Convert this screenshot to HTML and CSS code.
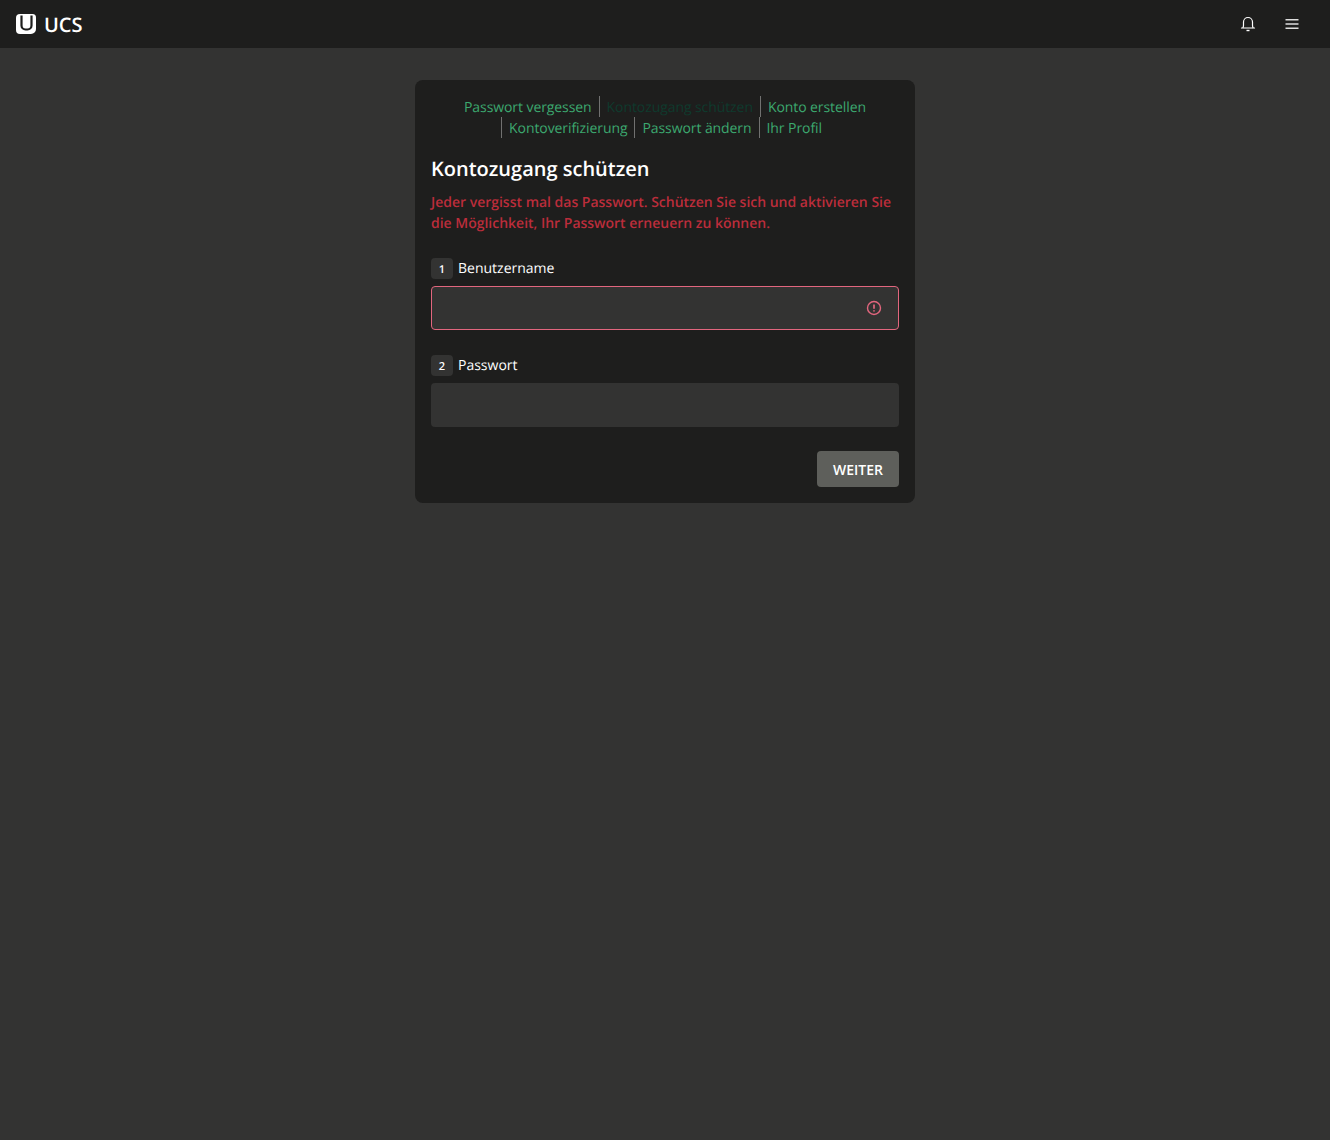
FILE: index.html
```html
<!DOCTYPE html>
<html lang="de">
<head>
<meta charset="utf-8">
<title>UCS</title>
<link rel="stylesheet" href="styles.css">
</head>
<body>
<header class="topbar">
  <a class="brand" href="#">
    <svg class="logo" width="20" height="20" viewBox="0 0 20 20"><path fill="#fff" d="M4 0h12.500a3.500 3.500 0 0 1 3.500 3.500V15a5 5 0 0 1-5 5H4a4 4 0 0 1-4-4V4a4 4 0 0 1 4-4z"/><path fill="none" stroke="#1e1e1d" stroke-width="2.200" d="M5.500 1.500V11.500a4 4 0 0 0 4 4h2a4 4 0 0 0 4-4V1.500"/></svg>
    <span class="brand-name">UCS</span>
  </a>
  <div class="actions">
    <button class="icon-btn" aria-label="Benachrichtigungen">
      <svg width="20" height="20" viewBox="0 0 20 20" fill="none" stroke="#fff" stroke-width="1.200"><path d="M4.800 14c.5-.8.700-1.700.700-2.800V8a4.500 4.500 0 0 1 9 0v3.200c0 1.100.2 2 .7 2.800"/><path d="M3.500 14h13" stroke-linecap="round"/><path d="M8.500 16.500h3" stroke-width="1.400"/></svg>
    </button>
    <button class="icon-btn" aria-label="Menü">
      <svg width="20" height="20" viewBox="0 0 20 20" fill="#ddd"><rect x="3.500" y="5" width="13" height="1.500"/><rect x="3.500" y="9.250" width="13" height="1.500"/><rect x="3.500" y="13.500" width="13" height="1.500"/></svg>
    </button>
  </div>
</header>
<main class="page">
  <section class="card">
    <nav class="links">
      <a class="link" href="#">Passwort vergessen</a>
      <a class="link divided current" href="#">Kontozugang schützen</a>
      <a class="link divided" href="#">Konto erstellen</a>
      <a class="link divided" href="#">Kontoverifizierung</a>
      <a class="link divided" href="#">Passwort ändern</a>
      <a class="link divided" href="#">Ihr Profil</a>
    </nav>
    <h1 class="title">Kontozugang schützen</h1>
    <p class="alert">Jeder vergisst mal das Passwort. Schützen Sie sich und aktivieren Sie die Möglichkeit, Ihr Passwort erneuern zu können.</p>
    <form class="form">
      <div class="field">
        <label class="label"><span class="num">1</span>Benutzername</label>
        <div class="input-box invalid">
          <svg width="16" height="16" viewBox="0 0 16 16" fill="none" stroke="#e2667e" stroke-width="1.400"><circle cx="8" cy="8" r="6.500"/><path d="M8 4.500v4.300M8 10.200v1.400" stroke-width="1.700"/></svg>
        </div>
      </div>
      <div class="field">
        <label class="label"><span class="num">2</span>Passwort</label>
        <div class="input-box"></div>
      </div>
      <div class="submit-row"><button type="button" class="submit">WEITER</button></div>
    </form>
  </section>
</main>
</body>
</html>
```
FILE: styles.css
```css
* { box-sizing: border-box; }
html, body { margin: 0; height: 100%; }
body {
  background: #333332;
  color: #fff;
  font-family: "Open Sans", "Liberation Sans", sans-serif;
  font-size: 14px;
  line-height: 21px;
  text-rendering: geometricPrecision;
  -webkit-font-smoothing: antialiased;
}
.topbar {
  height: 48px;
  background: #1e1e1d;
  display: flex;
  align-items: center;
  justify-content: space-between;
  padding: 0 16px;
}
.brand {
  display: flex;
  align-items: center;
  gap: 8px;
  color: #fff;
  text-decoration: none;
}
.logo { display: block; }
.brand-name { font-size: 20px; font-weight: 600; line-height: 28px; padding-top: 2px; }
.actions { display: flex; gap: 24px; margin-right: 12px; }
.icon-btn {
  width: 20px;
  height: 20px;
  padding: 0;
  border: 0;
  background: none;
  display: block;
}
.icon-btn svg { display: block; }
.page { display: flex; justify-content: center; padding-top: 32px; }
.card {
  width: 500px;
  padding: 16px;
  background: #1e1e1d;
  border-radius: 8px;
}
.links {
  display: flex;
  flex-wrap: wrap;
  justify-content: center;
}
.link {
  height: 21px;
  padding: 0 7px;
  color: #3ca86f;
  letter-spacing: -0.08px;
  line-height: 23px;
  text-decoration: none;
}
.divided { border-left: 1px solid #717170; }
.current { color: #0f3a2d; }
.title {
  margin: 16px 0 0;
  font-size: 20px;
  font-weight: 600;
  line-height: 30px;
}
.alert {
  margin: 8px 0 0;
  color: #bb2d3b;
  font-weight: 600;
  letter-spacing: -0.01px;
}
.form { margin-top: 24px; }
.field { margin-bottom: 24px; }
.field + .field { margin-top: 25px; }
.label {
  display: flex;
  align-items: center;
  height: 21px;
  margin-bottom: 7px;
}
.num {
  width: 22px;
  height: 21px;
  margin-right: 5px;
  background: #333332;
  border-radius: 4px;
  font-size: 11px;
  font-weight: 600;
  text-align: center;
  line-height: 24px;
}
.input-box {
  height: 44px;
  background: #333332;
  border-radius: 4px;
  display: flex;
  align-items: center;
  justify-content: flex-end;
  padding-right: 16px;
}
.invalid { border: 1px solid #e2667e; padding-right: 16px; }
.submit-row { display: flex; justify-content: flex-end; }
.submit {
  width: 82px;
  height: 36px;
  padding: 2px 0 0;
  border: 0;
  border-radius: 4px;
  background: #5e5f5b;
  color: #fff;
  font: 600 14px/21px "Open Sans", "Liberation Sans", sans-serif;
  text-rendering: geometricPrecision;
}
```
